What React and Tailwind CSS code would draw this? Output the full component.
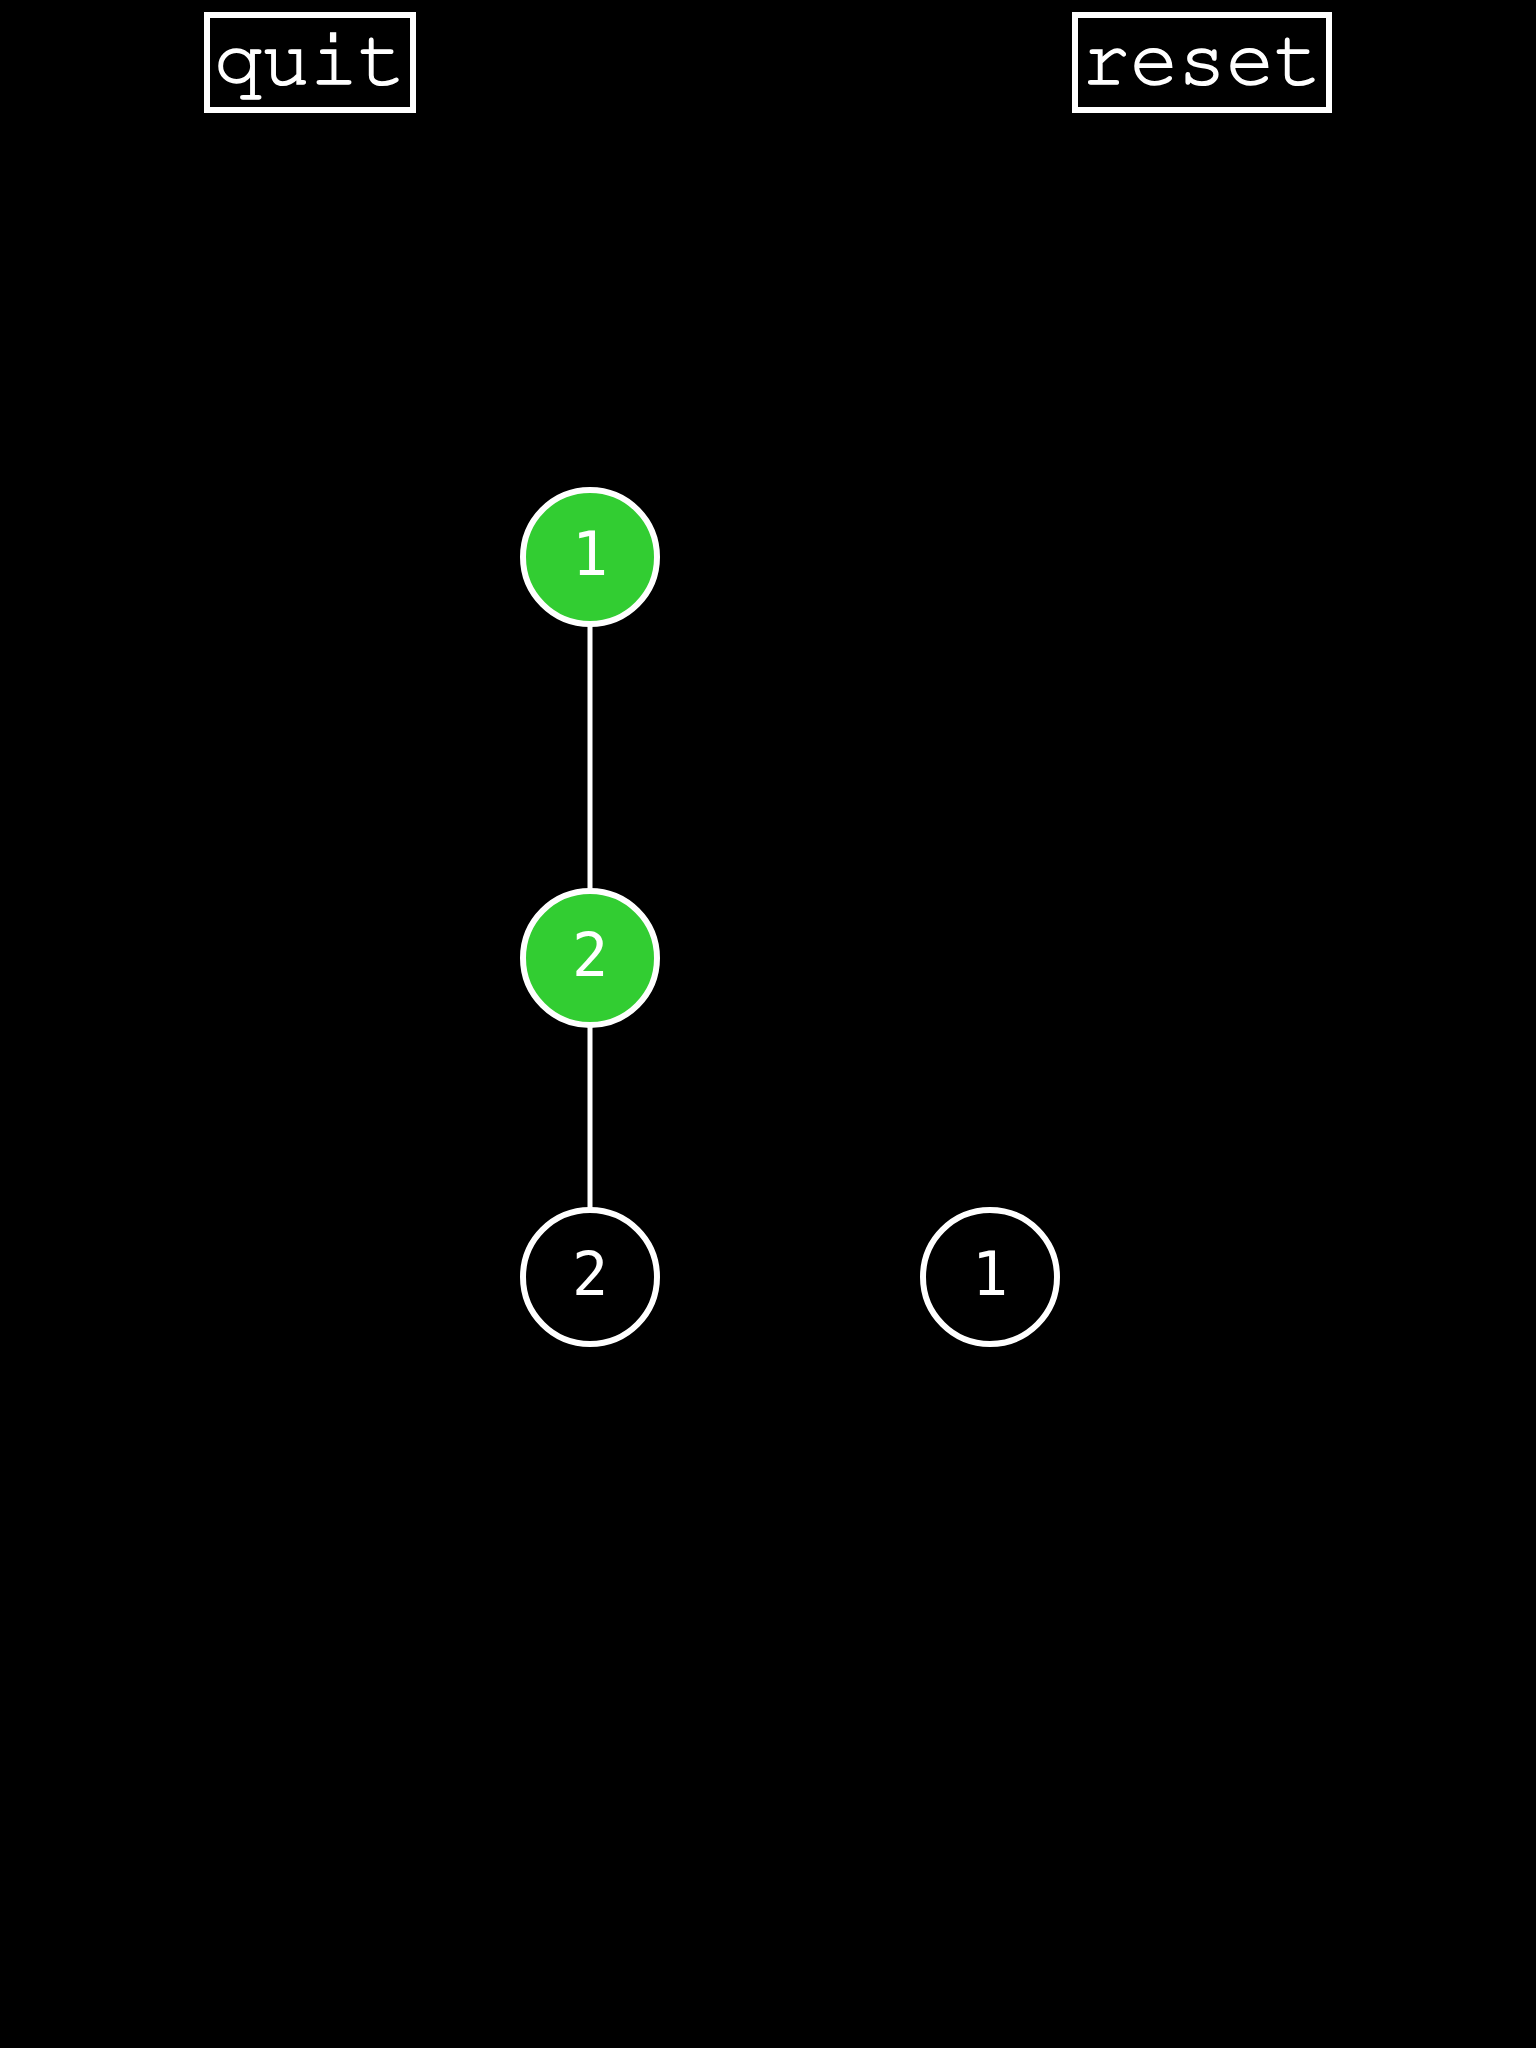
const nodes = [
  { id: "a", label: "1", x: 590, y: 557, active: true },
  { id: "b", label: "2", x: 590, y: 958, active: true },
  { id: "c", label: "2", x: 590, y: 1277, active: false },
  { id: "d", label: "1", x: 990, y: 1277, active: false },
];

const edges = [
  ["a", "b"],
  ["b", "c"],
];

const NODE_SIZE = 140;
const TOP_OFFSET = 113; // height of the header row

function TextButton({ children }) {
  return (
    <button className="h-[101px] border-[6px] border-white bg-black px-[4px] pb-[4px] text-[80px] leading-[85px] text-white [-webkit-text-stroke:1.5px_white] font-['Nimbus_Mono_PS','FreeMono','Courier_New',Courier,'Liberation_Mono',monospace]">
      {children}
    </button>
  );
}

function Node({ node }) {
  return (
    <div
      className={`absolute flex items-center justify-center rounded-full border-[6px] border-white text-white text-[60px] leading-none font-['DejaVu_Sans_Mono',monospace] ${
        node.active ? "bg-[#32cd32]" : "bg-black"
      } w-[140px] h-[140px]`}
      style={{ left: node.x - NODE_SIZE / 2, top: node.y - TOP_OFFSET - NODE_SIZE / 2 }}
    >
      <span className="-mt-[6px]">{node.label}</span>
    </div>
  );
}

export default function App() {
  const byId = Object.fromEntries(nodes.map((n) => [n.id, n]));

  return (
    <div className="min-h-[2048px] w-full bg-black">
      <div className="flex items-start justify-between px-[204px] pt-[12px]">
        <TextButton>quit</TextButton>
        <TextButton>reset</TextButton>
      </div>

      <div className="relative h-[1935px] w-full">
        <svg className="absolute inset-0" width="1536" height="1935">
          {edges.map(([from, to]) => {
            const a = byId[from];
            const b = byId[to];
            return (
              <line
                key={from + to}
                x1={a.x}
                y1={a.y - TOP_OFFSET}
                x2={b.x}
                y2={b.y - TOP_OFFSET}
                stroke="white"
                strokeWidth="5"
              />
            );
          })}
        </svg>
        {nodes.map((node) => (
          <Node key={node.id} node={node} />
        ))}
      </div>
    </div>
  );
}
